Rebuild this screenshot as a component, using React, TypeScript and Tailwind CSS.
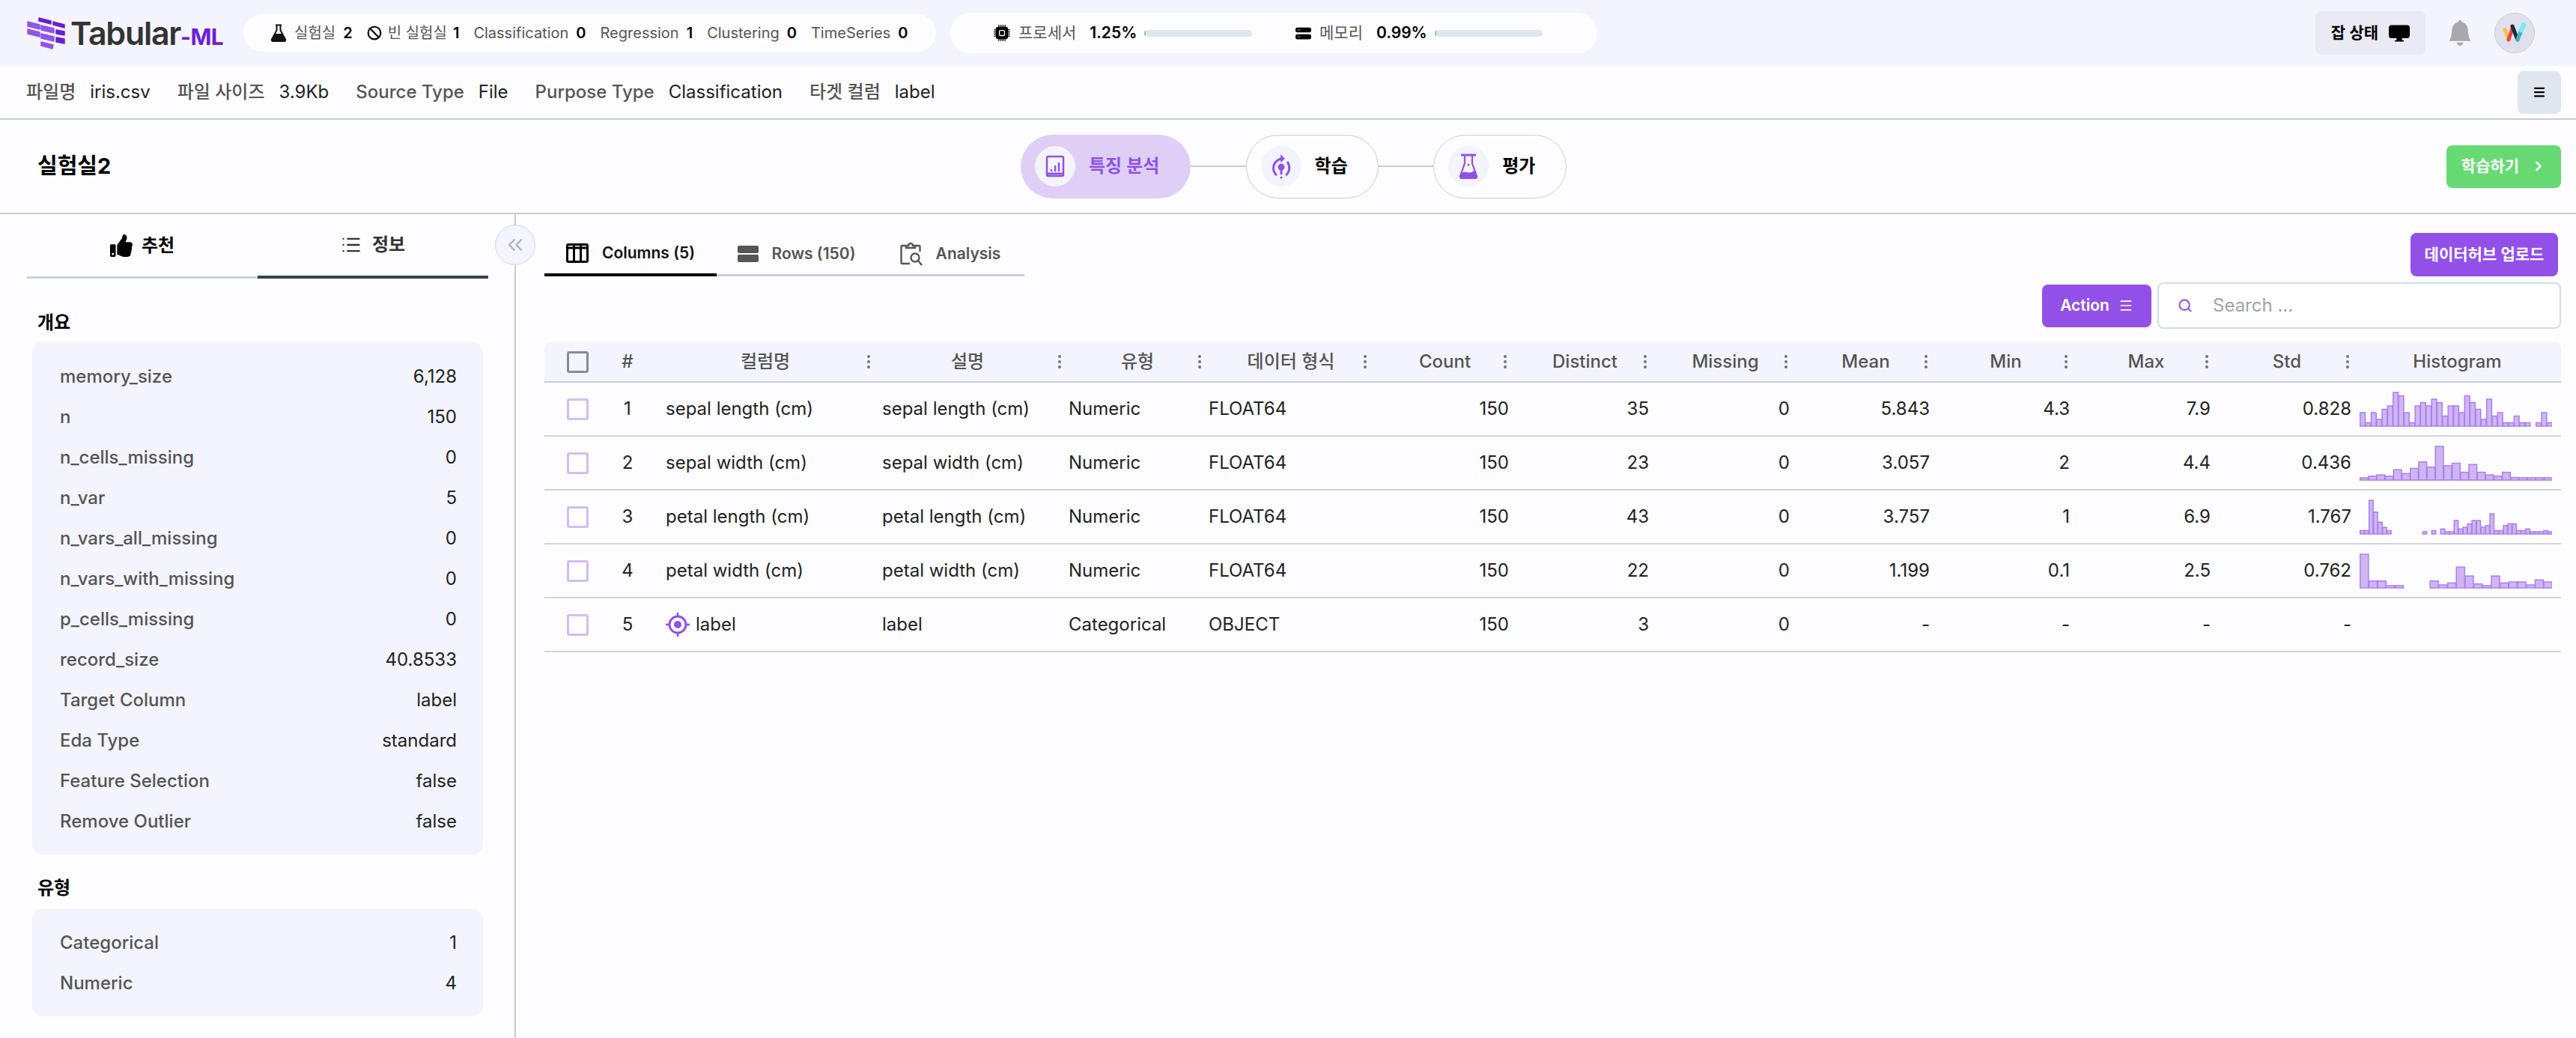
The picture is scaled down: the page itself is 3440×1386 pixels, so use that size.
import { Ban, ChevronRight, ChevronsLeft, EllipsisVertical, List, Menu, Search } from 'lucide-react';
import { BsBellFill, BsCpuFill, BsDisplayFill, BsHddStackFill } from 'react-icons/bs';
import { FaThumbsUp } from 'react-icons/fa';

const TABLE_GRID =
  'grid grid-cols-[88px_46px_307px_255px_187px_221px_187px_187px_188px_187px_187px_188px_188px_277px]';

const overview = [
  ['memory_size', '6,128'],
  ['n', '150'],
  ['n_cells_missing', '0'],
  ['n_var', '5'],
  ['n_vars_all_missing', '0'],
  ['n_vars_with_missing', '0'],
  ['p_cells_missing', '0'],
  ['record_size', '40.8533'],
  ['Target Column', 'label'],
  ['Eda Type', 'standard'],
  ['Feature Selection', 'false'],
  ['Remove Outlier', 'false'],
];

const types = [
  ['Categorical', '1'],
  ['Numeric', '4'],
];

const headers = ['Count', 'Distinct', 'Missing', 'Mean', 'Min', 'Max', 'Std'];

const rows = [
  {
    name: 'sepal length (cm)', type: 'Numeric', format: 'FLOAT64',
    nums: ['150', '35', '0', '5.843', '4.3', '7.9', '0.828'],
    hist: [4, 1, 4, 2, 5, 6, 10, 9, 4, 1, 6, 7, 6, 8, 7, 3, 6, 6, 4, 9, 7, 5, 2, 8, 3, 4, 1, 1, 3, 1, 1, 0, 1, 4, 1],
  },
  {
    name: 'sepal width (cm)', type: 'Numeric', format: 'FLOAT64',
    nums: ['150', '23', '0', '3.057', '2', '4.4', '0.436'],
    hist: [1, 3, 4, 3, 8, 5, 9, 14, 10, 26, 11, 13, 6, 12, 6, 4, 3, 6, 2, 1, 1, 1, 1],
  },
  {
    name: 'petal length (cm)', type: 'Numeric', format: 'FLOAT64',
    nums: ['150', '43', '0', '3.757', '1', '6.9', '1.767'],
    hist: [2, 2, 20, 13, 7, 4, 2, 0, 0, 0, 0, 0, 0, 0, 1, 0, 2, 0, 3, 1, 1, 8, 3, 4, 6, 8, 8, 4, 5, 12, 2, 2, 5, 6, 6, 2, 2, 3, 1, 1, 1, 2, 1],
  },
  {
    name: 'petal width (cm)', type: 'Numeric', format: 'FLOAT64',
    nums: ['150', '22', '0', '1.199', '0.1', '2.5', '0.762'],
    hist: [34, 7, 7, 1, 1, 0, 0, 0, 7, 3, 5, 21, 12, 4, 2, 12, 5, 6, 6, 3, 8, 6],
  },
  {
    name: 'label', type: 'Categorical', format: 'OBJECT', target: true,
    nums: ['150', '3', '0', '-', '-', '-', '-'],
    hist: [],
  },
];

const Logo = () => (
  <svg width="52" height="44" viewBox="0 0 52 44" className="shrink-0">
    <g stroke="#9055e8" strokeWidth="1.5" strokeLinejoin="round" fill="#9055e8">
      <polygon points="2,7 18,11 18,17 2,13" />
      <polygon points="2,17 18,21 18,27 2,23" />
      <polygon points="20,12 37,16 37,22 20,18" />
      <polygon points="20,23 37,27 37,33 20,29" />
      <polygon points="20,34 36,38 35,43 20,39" />
    </g>
    <g stroke="#6a1fd1" strokeWidth="1.5" strokeLinejoin="round" fill="#6a1fd1">
      <polygon points="17,2 33,6 33,10 17,6" />
      <polygon points="36,7 51,11 51,15 36,11" />
      <polygon points="40,18 51,20 51,25 40,23" />
      <polygon points="40,28 51,30 51,36 40,34" />
    </g>
  </svg>
);

const SmallFlask = () => (
  <svg width="22" height="24" viewBox="0 0 22 24" className="shrink-0">
    <path d="M7 1.5h8M8.5 1.5v7L2 20.5c-.6 1.2.2 2.5 1.5 2.5h15c1.3 0 2.1-1.3 1.5-2.5L13.5 8.5v-7" fill="none" stroke="#111" strokeWidth="2" />
    <path d="M6 13h10l4 8.5-1 1.5H3l-1-1.5z" fill="#111" />
  </svg>
);

const Avatar = () => (
  <div className="w-[54px] h-[54px] rounded-full bg-[#dfe0ec] border border-[#c9ced9] flex items-center justify-center">
    <svg width="32" height="30" viewBox="0 0 32 30">
      <path d="M3 10l5 14" stroke="#f5c842" strokeWidth="5" strokeLinecap="round" />
      <path d="M8 24l5-15" stroke="#ef4444" strokeWidth="5" strokeLinecap="round" />
      <path d="M13 6l7 18" stroke="#17303b" strokeWidth="5" strokeLinecap="round" />
      <path d="M20 24l8-20" stroke="#3fb5b8" strokeWidth="5" strokeLinecap="round" />
      <path d="M25 12l3-9" stroke="#6fefff" strokeWidth="5" strokeLinecap="round" />
    </svg>
  </div>
);

const ChartIcon = () => (
  <svg width="26" height="30" viewBox="0 0 26 30" fill="none" stroke="#8f52e8">
    <rect x="2" y="2" width="22" height="26" rx="2" strokeWidth="2.5" />
    <path d="M2 25h22" strokeWidth="3" />
    <path d="M8 22v-3M13 22v-8M18 22v-12" strokeWidth="2.5" />
  </svg>
);

const TrainIcon = () => (
  <svg width="26" height="34" viewBox="0 0 26 34" fill="none" stroke="#8f52e8">
    <path d="M7 29c-6-5-6-14 0-19 2-2 5-3 7-3" strokeWidth="3" />
    <path d="M19 29c6-5 6-13 2-18" strokeWidth="3" />
    <path d="M12 1l6 6-6 5z" fill="#8f52e8" stroke="none" />
    <circle cx="13" cy="18" r="4.5" fill="#8f52e8" stroke="none" />
    <path d="M13 22v6" strokeWidth="3" />
    <circle cx="13" cy="32" r="1.5" fill="#8f52e8" stroke="none" />
  </svg>
);

const EvalIcon = () => (
  <svg width="26" height="34" viewBox="0 0 26 34" fill="none">
    <path d="M3 2h20" stroke="#8f52e8" strokeWidth="3" />
    <path d="M8 3v10L2 30c-.5 1.5.5 3 2 3h18c1.500 0 2.500-1.500 2-3L18 13V3" stroke="#8f52e8" strokeWidth="2.200" />
    <path d="M3 27c3-3 5-3 8-2 4 1 8 0 10-3l3 8-1 3H3l-1-3z" fill="#8f52e8" />
    <circle cx="13" cy="15" r="1.500" fill="#8f52e8" />
  </svg>
);

const ColumnsIcon = () => (
  <svg width="30" height="26" viewBox="0 0 30 26" fill="none" stroke="#000" className="shrink-0">
    <rect x="1.500" y="1.500" width="27" height="23" rx="1.500" strokeWidth="3" />
    <path d="M1 6h28" strokeWidth="3" />
    <path d="M10.500 3v21M19.500 3v21" strokeWidth="3" />
  </svg>
);

const RowsIcon = () => (
  <svg width="28" height="22" viewBox="0 0 28 22" fill="#555" className="shrink-0">
    <rect width="28" height="10" y="0" rx="2" />
    <rect width="28" height="10" y="12" rx="2" />
  </svg>
);

const AnalysisIcon = () => (
  <svg width="30" height="32" viewBox="0 0 30 32" fill="none" stroke="#555" strokeWidth="2.400" className="shrink-0">
    <path d="M7 5H3a1.500 1.500 0 0 0-1.500 1.500v21A1.500 1.500 0 0 0 3 29h10M21 5h4a1.500 1.500 0 0 1 1.500 1.500V13" />
    <path d="M8 8V5h3a3 3 0 0 1 6 0h3v3z" />
    <circle cx="20" cy="21" r="5.500" />
    <path d="M24 25l5 6" />
  </svg>
);

const TargetIcon = () => (
  <svg width="32" height="32" viewBox="0 0 32 32" fill="none" stroke="#8f52e8" className="shrink-0">
    <circle cx="16" cy="16" r="11" strokeWidth="3" />
    <circle cx="16" cy="16" r="5" fill="#8f52e8" stroke="none" />
    <path d="M16 0v5M16 27v5M0 16h5M27 16h5" strokeWidth="2.500" />
  </svg>
);

const Histogram = ({ data }: { data: number[] }) => {
  if (data.length === 0) return null;
  const max = Math.max(...data);
  const barW = 257 / data.length;
  return (
    <svg width="257" height="48" viewBox="0 0 257 48">
      {data.map((v, i) => {
        if (v === 0) return null;
        const h = Math.max((v / max) * 45, 3);
        return (
          <rect
            key={i}
            x={i * barW + 0.75}
            y={47 - h}
            width={barW - 0.6}
            height={h}
            fill="#cfb6f3"
            stroke="#ab7ff0"
            strokeWidth="1.500"
          />
        );
      })}
    </svg>
  );
};

const Kebab = () => (
  <EllipsisVertical size={24} strokeWidth={2} className="absolute right-[-4px] top-1/2 -translate-y-1/2 text-[#6b7280]" />
);

const Stat = ({ label, value, icon }: { label: string; value: string; icon?: React.ReactNode }) => (
  <div className="flex items-center gap-[10px]">
    {icon}
    <span className="text-[#555]">{label}</span>
    <span className="font-semibold text-black">{value}</span>
  </div>
);

const Meter = ({ icon, label, value }: { icon: React.ReactNode; label: string; value: string }) => (
  <div className="flex items-center w-[417px]">
    {icon}
    <span className="ml-[11px] text-[#555]">{label}</span>
    <span className="ml-[18px] font-semibold text-black">{value}</span>
    <div className="ml-[10px] w-[144px] h-[9px] rounded-full bg-[#dfe6ee] overflow-hidden">
      <div className="h-full w-[2px] bg-[#68da74]" />
    </div>
  </div>
);

const Step = ({ icon, label, active }: { icon: React.ReactNode; label: string; active?: boolean }) => (
  <div
    className={`h-[85px] rounded-full flex items-center gap-[18px] pl-[19px] text-[24px] font-semibold ${
      active ? 'w-[227px] bg-[#dfcff7] text-[#8f52e8]' : 'w-[178px] border border-[#c9ccd3] text-black'
    }`}
  >
    <div className="w-[54px] h-[54px] rounded-full bg-[#f3f4fd] flex items-center justify-center shrink-0">{icon}</div>
    <span>{label}</span>
  </div>
);

const InfoCard = ({ items }: { items: string[][] }) => (
  <div className="mx-[7px] rounded-[14px] bg-[#f3f4fd] pt-[19px] pb-[17px] pl-[37px] pr-[35px] text-[24px]">
    {items.map(([k, v]) => (
      <div key={k} className="h-[54px] flex items-center justify-between">
        <span className="font-medium text-[#555]">{k}</span>
        <span className="text-[#222]">{v}</span>
      </div>
    ))}
  </div>
);

export default function App() {
  return (
    <div className="w-[3440px] h-[1386px] overflow-hidden flex flex-col bg-[#fdfdff] text-[#222] font-['Inter','Noto_Sans_CJK_KR',sans-serif]">
      {/* top bar */}
      <header className="h-[88px] shrink-0 bg-[#f3f4fd] flex items-center pl-[35px] pr-[55px]">
        <div className="w-[290px] flex items-center">
          <Logo />
          <span className="ml-[7px] text-[43px] leading-none font-semibold tracking-[-0.03em] text-[#333]">Tabular</span>
          <span className="mt-[10px] text-[30px] leading-none font-bold tracking-[-0.02em] text-[#6d1fd6]">-ML</span>
        </div>
        <div className="h-[50px] w-[925px] rounded-full bg-[#fdfdff] flex items-center gap-[19px] pl-[36px] text-[20px]">
          <Stat label="실험실" value="2" icon={<SmallFlask />} />
          <div className="flex items-center gap-[8px]">
            <Ban size={20} strokeWidth={2.5} className="text-black" />
            <span className="text-[#555]">빈 실험실</span>
            <span className="font-semibold text-black">1</span>
          </div>
          <Stat label="Classification" value="0" />
          <Stat label="Regression" value="1" />
          <Stat label="Clustering" value="0" />
          <Stat label="TimeSeries" value="0" />
        </div>
        <div className="ml-[19px] h-[54px] w-[864px] rounded-full bg-[#fdfdff] flex items-center pl-[58px] text-[21px]">
          <Meter icon={<BsCpuFill size={22} className="text-black" />} label="프로세서" value="1.25%" />
          <Meter icon={<BsHddStackFill size={21} className="text-black" />} label="메모리" value="0.99%" />
        </div>
        <div className="ml-auto flex items-center">
          <div className="w-[147px] h-[58px] rounded-[8px] bg-[#eaeaf4] flex items-center justify-center gap-[14px] text-[21px] font-semibold text-black">
            <span>잡 상태</span>
            <BsDisplayFill size={28} />
          </div>
          <BsBellFill size={34} className="ml-[29px] text-[#a9a9ad]" />
          <div className="ml-[29px]">
            <Avatar />
          </div>
        </div>
      </header>

      {/* file info */}
      <div className="h-[72px] shrink-0 border-b-2 border-[#c9ccd3] flex items-center gap-[36px] pl-[35px] pr-[20px] text-[24px]">
        {[
          ['파일명', 'iris.csv'],
          ['파일 사이즈', '3.9Kb'],
          ['Source Type', 'File'],
          ['Purpose Type', 'Classification'],
          ['타겟 컬럼', 'label'],
        ].map(([k, v]) => (
          <div key={k} className="flex items-center gap-[19px]">
            <span className="font-medium text-[#555]">{k}</span>
            <span className="text-[#222]">{v}</span>
          </div>
        ))}
        <button className="ml-auto w-[58px] h-[57px] rounded-[8px] bg-[#dfe6ee] flex items-center justify-center">
          <Menu size={18} strokeWidth={3} className="text-black" />
        </button>
      </div>

      {/* steps */}
      <div className="h-[126px] shrink-0 border-b-2 border-[#c9ccd3] grid grid-cols-[1363px_729px_1fr] items-center">
        <h1 className="pl-[50px] text-[29px] font-bold text-black">실험실2</h1>
        <div className="flex items-center">
          <Step active label="특징 분석" icon={<ChartIcon />} />
          <div className="w-[74px] h-[2px] bg-[#c9ccd3]" />
          <Step label="학습" icon={<TrainIcon />} />
          <div className="w-[73px] h-[2px] bg-[#c9ccd3]" />
          <Step label="평가" icon={<EvalIcon />} />
        </div>
        <div className="flex justify-end pr-[20px]">
          <button className="w-[153px] h-[57px] rounded-[8px] bg-[#68da74] flex items-center justify-center gap-[16px] text-[21px] font-semibold text-white">
            <span>학습하기</span>
            <ChevronRight size={20} strokeWidth={3} />
          </button>
        </div>
      </div>

      <div className="flex-1 flex min-h-0">
        {/* sidebar */}
        <aside className="relative w-[689px] shrink-0 border-r-2 border-[#c9ccd3] pl-[36px] pr-[35px]">
          <div className="grid grid-cols-2 h-[86px] text-[24px] font-semibold">
            <div className="flex items-center justify-center gap-[12px] border-b-[3px] border-[#c6d1dc] text-black">
              <FaThumbsUp size={30} />
              <span>추천</span>
            </div>
            <div className="flex items-center justify-center gap-[14px] border-b-[4px] border-[#374151] text-[#333]">
              <List size={28} strokeWidth={2} />
              <span>정보</span>
            </div>
          </div>
          <h2 className="mt-[44px] mb-[11px] pl-[14px] h-[30px] leading-[30px] text-[24px] font-semibold text-black">개요</h2>
          <InfoCard items={overview} />
          <h2 className="mt-[30px] mb-[12px] pl-[14px] h-[30px] leading-[30px] text-[24px] font-semibold text-black">유형</h2>
          <InfoCard items={types} />
          <button className="absolute left-[661px] top-[14px] w-[54px] h-[54px] rounded-full bg-[#f3f4fd] border border-[#d4d8e3] flex items-center justify-center">
            <ChevronsLeft size={32} strokeWidth={2} className="text-[#b4bacb]" />
          </button>
        </aside>

        {/* main */}
        <main className="flex-1 min-w-0 pl-[38px] pr-[20px]">
          <div className="flex items-end justify-between pt-[25px]">
            <div className="flex items-end h-[58px] text-[21px] font-semibold">
              <div className="h-full w-[230px] flex items-center justify-center gap-[18px] border-b-[4px] border-black text-[#111]">
                <ColumnsIcon />
                <span>Columns (5)</span>
              </div>
              <div className="h-full w-[213px] flex items-center justify-center gap-[18px] border-b-[3px] border-[#c6d1dc] text-[#555]">
                <RowsIcon />
                <span>Rows (150)</span>
              </div>
              <div className="h-full w-[198px] flex items-center justify-center gap-[18px] border-b-[3px] border-[#c6d1dc] text-[#555]">
                <AnalysisIcon />
                <span>Analysis</span>
              </div>
            </div>
            <button className="w-[197px] h-[58px] mr-[4px] rounded-[8px] bg-[#9350e8] text-[21px] font-semibold text-white">데이터허브 업로드</button>
          </div>

          <div className="mt-[8px] flex items-center justify-end gap-[8px]">
            <button className="w-[146px] h-[57px] rounded-[8px] bg-[#9350e8] flex items-center justify-center gap-[12px] text-[21px] font-semibold text-white">
              <span>Action</span>
              <Menu size={20} strokeWidth={2} />
            </button>
            <div className="w-[539px] h-[62px] rounded-[8px] border-2 border-[#d6dbe5] bg-white flex items-center pl-[25px] text-[24px] text-[#9ca3af]">
              <Search size={20} strokeWidth={2.5} className="text-[#8f52e8]" />
              <span className="ml-[27px]">Search ...</span>
            </div>
          </div>

          <div className="mt-[18px]">
            <div className={`${TABLE_GRID} h-[54px] items-center rounded-t-[8px] bg-[#f3f4fd] border-b-2 border-[#c9ccd3] text-[24px] font-medium text-[#555]`}>
              <div className="flex justify-center pl-[1px]">
                <div className="w-[29px] h-[29px] rounded-[3px] border-[3px] border-[#848d98]" />
              </div>
              <div className="text-center">#</div>
              <div className="relative pl-[15px] text-center">컬럼명<Kebab /></div>
              <div className="relative text-center pr-[7px]">설명<Kebab /></div>
              <div className="relative text-center pl-[5px]">유형<Kebab /></div>
              <div className="relative text-center pl-[7px]">데이터 형식<Kebab /></div>
              {headers.map(h => (
                <div key={h} className="relative text-center pl-[10px]">{h}<Kebab /></div>
              ))}
              <div className="text-center">Histogram</div>
            </div>
            {rows.map((row, i) => (
              <div key={row.name} className={`${TABLE_GRID} h-[72px] items-center border-b-2 border-[#d3d5da] text-[24px] text-[#222]`}>
                <div className="flex justify-center pl-[1px]">
                  <div className="w-[29px] h-[29px] rounded-[3px] border-[3px] border-[#d3bcf3]" />
                </div>
                <div className="text-center">{i + 1}</div>
                <div className="pl-[28px] flex items-center gap-[8px]">
                  {row.target && <TargetIcon />}
                  <span>{row.name}</span>
                </div>
                <div className="pl-[10px]">{row.name}</div>
                <div className="pl-[4px]">{row.type}</div>
                <div className="pl-[4px]">{row.format}</div>
                {row.nums.map((n, j) => (
                  <div key={j} className="text-right pr-[3px]">{n}</div>
                ))}
                <div className="pl-[8px] flex items-center">
                  <Histogram data={row.hist} />
                </div>
              </div>
            ))}
          </div>
        </main>
      </div>
    </div>
  );
}
